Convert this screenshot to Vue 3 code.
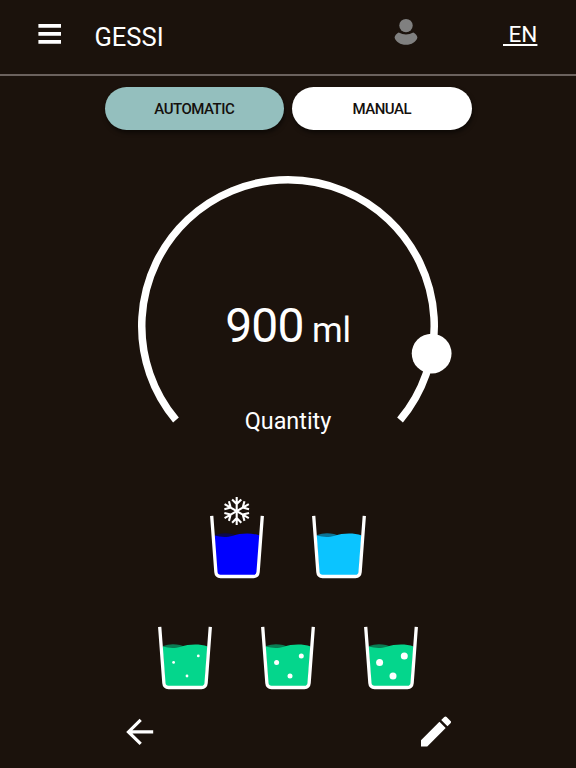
<script setup>
import { ref, computed } from 'vue'

const mode = ref('automatic')
const quantity = ref(900)

// Available drinks, one array per row
const drinks = [
  [
    { id: 'cold', color: '#0000ff', back: '#0a0850', snow: true, bubble: 0 },
    { id: 'ambient', color: '#0bc4ff', back: '#0b7396', snow: false, bubble: 0 },
  ],
  [
    { id: 'light', color: '#04d68c', back: '#0a7c53', snow: false, bubble: 1.4 },
    { id: 'medium', color: '#04d68c', back: '#0a7c53', snow: false, bubble: 2.5 },
    { id: 'strong', color: '#04d68c', back: '#0a7c53', snow: false, bubble: 3.5 },
  ],
]

// Knob position on the dial, the arc goes from 140 to 400 degrees
const knob = computed(() => {
  const angle = ((140 + (quantity.value / 1000) * 256.5) * Math.PI) / 180
  return { x: 160 + 146.25 * Math.cos(angle), y: 160 + 146.25 * Math.sin(angle) }
})
</script>

<template>
  <div class="screen">
    <header class="topbar">
      <button class="icon-btn menu">
        <svg width="23" height="21" viewBox="0 0 23 21">
          <path d="M.4 1.9H23M.4 9.9H23M.4 17.9H23" stroke="#fff" stroke-width="3.8" />
        </svg>
      </button>
      <h1>GESSI</h1>
      <button class="icon-btn user">
        <svg width="24" height="28" viewBox="0 0 24 28">
          <circle cx="12" cy="7.6" r="6.7" />
          <path d="M4.7 14.5Q12 18.6 19.3 14.5C21.5 15.7 23.4 17.5 23.4 19.7C22.2 23.8 17.6 26.8 12 26.8S1.8 23.8.6 19.7C.6 17.5 2.5 15.7 4.7 14.5Z" />
        </svg>
      </button>
      <a class="lang">&nbsp;EN</a>
    </header>

    <!-- Mode switch -->
    <div class="modes">
      <button :class="{ active: mode === 'automatic' }" @click="mode = 'automatic'">AUTOMATIC</button>
      <button :class="{ active: mode === 'manual' }" @click="mode = 'manual'">MANUAL</button>
    </div>

    <!-- Quantity dial -->
    <div class="dial">
      <svg width="328" height="270" viewBox="-4 0 328 270">
        <path d="M47.97 254.01A146.25 146.25 0 1 1 272.03 254.01" fill="none" stroke="#fff" stroke-width="7.5" />
        <circle :cx="knob.x" :cy="knob.y" r="19.9" fill="#fff" />
      </svg>
      <div class="value">{{ quantity }}<span class="unit"> ml</span></div>
      <div class="label">Quantity</div>
    </div>

    <!-- Glasses -->
    <div class="drinks">
      <div v-for="(row, i) in drinks" :key="i" class="row">
        <button v-for="drink in row" :key="drink.id" class="icon-btn">
          <svg width="56" height="84" viewBox="0 0 56 84">
            <path d="M6 40Q14 37 23 39L32 42V45H6Z" :fill="drink.back" />
            <path d="M5.4 40.6C12 42.2 17 42.8 24 40.8C31 38.2 42 37.5 50.6 40.4L47.6 81H8.4Z" :fill="drink.color" />
            <path d="M2.7 20.8L6.9 77.2Q7.3 81.5 11.5 81.5H44.5Q48.7 81.5 49.1 77.2L53.3 20.8" fill="none" stroke="#fff" stroke-width="3.3" />
            <g v-if="drink.bubble" fill="#fff">
              <circle cx="16.6" cy="56.4" :r="drink.bubble" />
              <circle cx="41.3" cy="49.9" :r="drink.bubble" />
              <circle cx="30" cy="70" :r="drink.bubble" />
            </g>
            <g v-if="drink.snow" transform="translate(27.7 16.1)" fill="none" stroke="#fff" stroke-width="2.1">
              <path
                v-for="n in 6"
                :key="n"
                :transform="`rotate(${n * 60})`"
                d="M0 0V-14M-4.6 -11.6L0 -7L4.6 -11.6"
              />
            </g>
          </svg>
        </button>
      </div>
    </div>

    <footer class="actions">
      <button class="icon-btn">
        <svg width="28" height="28" viewBox="0 0 28 28">
          <path d="M14.7 1.9L2.5 13.9L14.7 25.9M2.5 13.9H27.2" fill="none" stroke="#fff" stroke-width="3.2" />
        </svg>
      </button>
      <button class="icon-btn">
        <svg width="30" height="31" viewBox="3 2.7 18 18.6">
          <path d="M3 17.25V21h3.75L17.81 9.94l-3.75-3.75L3 17.25zM20.71 7.04a1 1 0 0 0 0-1.41l-2.34-2.34a1 1 0 0 0-1.41 0l-1.83 1.83 3.75 3.75 1.83-1.83z" fill="#fff" />
        </svg>
      </button>
    </footer>
  </div>
</template>

<style>
body {
  background-color: #1b120c;
}
</style>

<style scoped>
.screen {
  height: 768px;
  display: flex;
  flex-direction: column;
  overflow: hidden;
  color: #fff;
  background-color: #1b120c;
  font-family: Roboto, "Liberation Sans", sans-serif;
}

svg {
  display: block;
}

.icon-btn {
  padding: 0;
  border: none;
  background: none;
}

.topbar {
  box-sizing: border-box;
  height: 76px;
  padding: 0 38px;
  display: flex;
  align-items: flex-start;
  border-bottom: 2px solid #6b625e;
}

.menu {
  margin-top: 24px;
}

h1 {
  margin: 22px 0 0 33.5px;
  font-size: 25.5px;
  font-weight: 400;
  line-height: 30px;
}

.user {
  margin: 18px 0 0 auto;
  fill: #808080;
}

.lang {
  width: 35px;
  margin: 21px 0 0 85px;
  font-size: 22.5px;
  line-height: 27px;
  text-decoration: underline;
  white-space: nowrap;
}

.modes {
  display: flex;
  justify-content: center;
  gap: 8px;
  margin-top: 11px;
}

.modes button {
  width: 179.5px;
  height: 42.5px;
  padding: 1px 0 0;
  border: none;
  border-radius: 22px;
  background-color: #fff;
  color: #14100d;
  font-family: inherit;
  font-size: 15px;
  font-weight: 500;
  letter-spacing: -0.5px;
  box-shadow: 1px 3px 4px rgba(0, 0, 0, 0.5);
}

.modes .active {
  background-color: #94bfbe;
}

.dial {
  display: grid;
  justify-items: center;
  margin-top: 36.5px;
}

.dial > * {
  grid-area: 1 / 1;
}

.value {
  margin-top: 132px;
  font-size: 48px;
  line-height: 56px;
  letter-spacing: -0.9px;
}

.unit {
  font-size: 35px;
  letter-spacing: -0.2px;
}

.label {
  margin-top: 241px;
  font-size: 23.4px;
  line-height: 28px;
}

.drinks {
  display: flex;
  flex-direction: column;
  gap: 27.5px;
  margin-top: 58.5px;
}

.row {
  display: flex;
  justify-content: center;
  gap: 46.7px;
}

.actions {
  display: flex;
  justify-content: space-between;
  padding: 0 125px 0 126px;
  margin-top: 26px;
}
</style>
